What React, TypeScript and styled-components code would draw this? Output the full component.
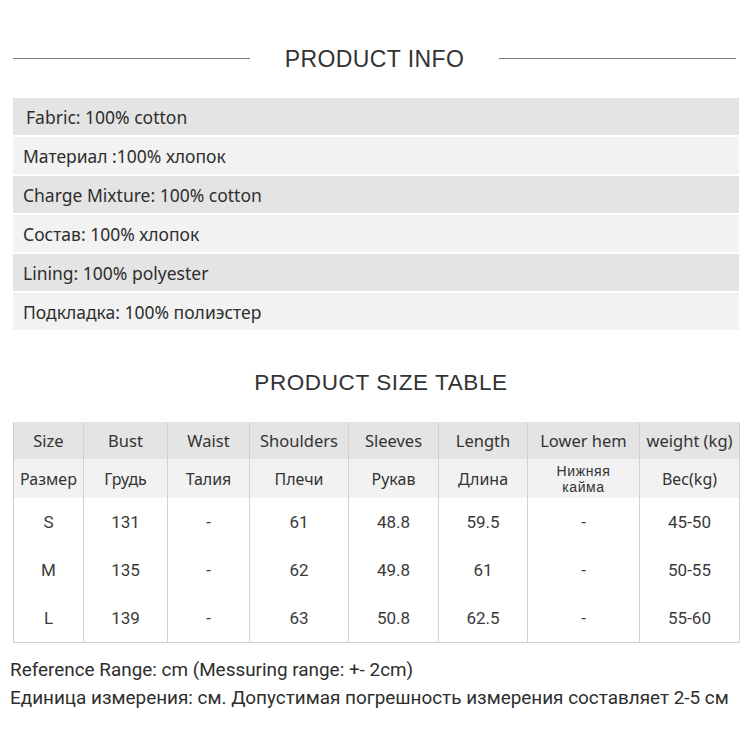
import React from 'react';
import styled, { createGlobalStyle } from 'styled-components';

const GlobalStyle = createGlobalStyle`
  body {
    margin: 0;
    background: #ffffff;
    font-family: 'Noto Sans', 'Open Sans', sans-serif;
    color: #333;
  }
`;

const info = [
  'Fabric: 100% cotton',
  'Материал :100% хлопок',
  'Charge Mixture: 100% cotton',
  'Состав: 100% хлопок',
  'Lining: 100% polyester',
  'Подкладка: 100% полиэстер',
];

const columns = [
  { en: 'Size', ru: ['Размер'], w: 70 },
  { en: 'Bust', ru: ['Грудь'], w: 84 },
  { en: 'Waist', ru: ['Талия'], w: 82 },
  { en: 'Shoulders', ru: ['Плечи'], w: 99 },
  { en: 'Sleeves', ru: ['Рукав'], w: 90 },
  { en: 'Length', ru: ['Длина'], w: 89 },
  { en: 'Lower hem', ru: ['Нижняя', 'кайма'], w: 112 },
  { en: 'weight (kg)', ru: ['Вес(kg)'], w: 100 },
];

const rows = [
  ['S', '131', '-', '61', '48.8', '59.5', '-', '45-50'],
  ['M', '135', '-', '62', '49.8', '61', '-', '50-55'],
  ['L', '139', '-', '63', '50.8', '62.5', '-', '55-60'],
];

const App = () => {
  return (
    <Page>
      <GlobalStyle />
      <TitleRow>
        <Rule />
        <Title>PRODUCT INFO</Title>
        <Rule />
      </TitleRow>
      <InfoList>
        {info.map((t, i) => (
          <InfoRow key={t} $dark={i % 2 === 0} $indent={i === 0 ? 13 : 10}>
            {t}
          </InfoRow>
        ))}
      </InfoList>
      <TableTitle>PRODUCT SIZE TABLE</TableTitle>
      <SizeTable>
        <colgroup>
          {columns.map((c) => (
            <col key={c.en} style={{ width: c.w }} />
          ))}
        </colgroup>
        <tbody>
          <HeadRow>
            {columns.map((c) => (
              <HeadCell key={c.en}>{c.en}</HeadCell>
            ))}
          </HeadRow>
          <SubRow>
            {columns.map((c) => (
              <SubCell key={c.en} $small={c.ru.length > 1}>
                {c.ru.map((line) => (
                  <SubLine key={line}>{line}</SubLine>
                ))}
              </SubCell>
            ))}
          </SubRow>
          {rows.map((r) => (
            <DataRow key={r[0]}>
              {r.map((v, i) => (
                <DataCell key={i}>{v}</DataCell>
              ))}
            </DataRow>
          ))}
        </tbody>
      </SizeTable>
      <Notes>
        <Note>Reference Range: cm (Messuring range: +- 2cm)</Note>
        <Note>Единица измерения: см. Допустимая погрешность измерения составляет 2-5 см</Note>
      </Notes>
    </Page>
  );
};

export default App;

const Page = styled.div`
  width: 750px;
  height: 756px;
  box-sizing: border-box;
  padding: 0 11px 0 13px;
  display: flex;
  flex-direction: column;
`;

const TitleRow = styled.div`
  margin-top: 44px;
  display: flex;
  align-items: center;
  gap: 35px;
  padding-right: 3px;
`;

const Rule = styled.div`
  flex: 1;
  height: 1px;
  border-top: 1.5px solid #7a7a7a;
`;

const Title = styled.div`
  font-family: 'Liberation Sans', Arial, sans-serif;
  font-size: 23px;
  letter-spacing: 0.4px;
  color: #333;
  line-height: 30px;
`;

const InfoList = styled.div`
  margin-top: 24px;
  display: flex;
  flex-direction: column;
  gap: 2px;
`;

const InfoRow = styled.div<{ $dark: boolean; $indent: number }>`
  height: 37px;
  display: flex;
  align-items: center;
  padding-left: ${(p) => p.$indent}px;
  background: ${(p) => (p.$dark ? '#e4e4e4' : '#f2f2f2')};
  font-size: 17.5px;
  color: #2e2e2e;
`;

const TableTitle = styled.div`
  margin-top: 38px;
  padding-left: 10px;
  text-align: center;
  font-family: 'Liberation Sans', Arial, sans-serif;
  font-size: 22.5px;
  letter-spacing: 0.6px;
  line-height: 30px;
  color: #333;
`;

const SizeTable = styled.table`
  margin-top: 24px;
  width: 726px;
  table-layout: fixed;
  border-collapse: collapse;
  border-left: 1px solid #cfcfcf;
  border-bottom: 1px solid #cfcfcf;
`;

const HeadRow = styled.tr`
  height: 37px;
  background: #e4e4e4;
`;

const SubRow = styled.tr`
  height: 39px;
  background: #f2f2f2;
`;

const DataRow = styled.tr`
  height: 48px;
`;

const cellBase = `
  padding: 0;
  text-align: center;
  border-right: 1px solid #d2d2d2;
  color: #333;
`;

const HeadCell = styled.td`
  ${cellBase}
  font-size: 16.5px;
`;

const SubCell = styled.td<{ $small: boolean }>`
  ${cellBase}
  font-family: ${(p) => (p.$small ? "'Liberation Sans', Arial, sans-serif" : 'inherit')};
  font-size: ${(p) => (p.$small ? '14px' : '16px')};
  line-height: ${(p) => (p.$small ? '16px' : 'normal')};
  letter-spacing: ${(p) => (p.$small ? '0.6px' : '0')};
`;

const SubLine = styled.div`
  display: block;
`;

const DataCell = styled.td`
  ${cellBase}
  font-family: 'Roboto', sans-serif;
  font-size: 17px;
  color: #3a3a3a;
`;

const Notes = styled.div`
  margin-top: 16px;
  margin-left: -3px;
  display: flex;
  flex-direction: column;
  gap: 6px;
  font-family: 'Roboto', sans-serif;
  font-size: 18.9px;
  color: #2e2e2e;
`;

const Note = styled.div`
  line-height: 22px;
  white-space: nowrap;
`;
